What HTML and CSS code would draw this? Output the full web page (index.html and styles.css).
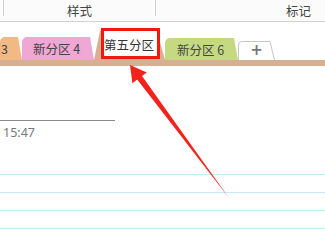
FILE: index.html
```html
<html>
    <head>
        <title>OneNote | Sections</title>
        <link rel="stylesheet" href="styles.css">
    </head>
    <body>
        <div class="ribbon">
            <div class="cell edge"></div>
            <div class="cell style">样式</div>
            <div class="cell mark">标记</div>
        </div>
        <div class="tabs">
            <div class="tab orange">3</div>
            <div class="tab pink">新分区 4</div>
            <div class="tab active"><span class="rename">第五分区</span></div>
            <div class="tab green">新分区 6</div>
            <div class="tab add">
                <svg class="add-shape" width="37" height="19" viewBox="0 0 37 19"><path d="M0.5 19 V4 Q0.5 0.5 4 0.5 H32 L36.5 19" fill="#fff" stroke="#c6c6c6"/></svg>
                <span>+</span>
            </div>
        </div>
        <div class="strip"></div>
        <div class="page">
            <div class="title-line"></div>
            <div class="time">15:47</div>
            <div class="rules">
                <div></div>
                <div></div>
                <div></div>
                <div></div>
                <div></div>
            </div>
        </div>
        <svg class="arrow" width="325" height="242" viewBox="0 0 325 242">
            <polygon points="130,65 146.8,72.4 142,76 229,198 137.2,79.6 132.4,83.2" fill="#f3221a"/>
        </svg>
    </body>
</html>
```

FILE: styles.css
```css
body {
    font-family: "Noto Sans CJK SC", sans-serif;
    margin: 0;
    overflow: hidden;
    color: #444;
}
.ribbon {
    display: flex;
    height: 21px;
    background: #fbfbfb;
    border-bottom: 1px solid #d2d2d2;
    font-size: 12.5px;
}
.cell {
    height: 16px;
    line-height: 22px;
    white-space: nowrap;
}
.edge {
    width: 3px;
    border-right: 1px solid #cfcfcf;
}
.style {
    width: 151px;
    text-align: center;
    border-right: 1px solid #cfcfcf;
}
.mark {
    padding-left: 130px;
}
.tabs {
    display: flex;
    align-items: flex-end;
    height: 38px;
    font-size: 12.5px;
}
.tab {
    position: relative;
    isolation: isolate;
    display: flex;
    align-items: center;
    box-sizing: border-box;
    height: 23px;
    white-space: nowrap;
}
.tab::before {
    content: "";
    position: absolute;
    inset: 0;
    z-index: -1;
    background: var(--c);
    border-radius: 5px 3px 0 0;
    clip-path: polygon(0 0, calc(100% - 4px) 0, 100% 100%, 0 100%);
}
.orange {
    --c: #f2b984;
    width: 22px;
    justify-content: flex-end;
    padding-right: 14px;
}
.pink {
    --c: #efa7d3;
    width: 72px;
    padding-left: 11px;
}
.active {
    --c: #d5b093;
    width: 71px;
    height: 29px;
    align-items: flex-end;
    padding: 0 0 1px 7px;
}
.active::before {
    border-radius: 3px 3px 0 0;
    clip-path: polygon(6px 0, calc(100% - 8px) 0, 100% 100%, 0 100%);
}
.rename {
    box-sizing: border-box;
    width: 59px;
    height: 31px;
    border: 3px solid #f0190f;
    background: #fff;
    padding-top: 2px;
    line-height: 24px;
    color: #333;
    overflow: hidden;
}
.green {
    --c: #c5da80;
    width: 73px;
    height: 22px;
    padding-left: 12px;
}
.add {
    width: 37px;
    height: 19px;
    justify-content: center;
}
.add::before {
    display: none;
}
.add-shape {
    position: absolute;
    left: 0;
    top: 0;
    z-index: -1;
}
.add span {
    color: #777;
    font-size: 15px;
    font-weight: bold;
    line-height: 19px;
    font-family: "DejaVu Sans", sans-serif;
}
.strip {
    height: 6px;
    background: #d5b093;
}
.title-line {
    margin-top: 54px;
    width: 115px;
    height: 1px;
    background: #8a8a8a;
}
.time {
    margin: 4px 0 0 3px;
    font-family: "Noto Sans", "Liberation Sans", sans-serif;
    font-size: 12.5px;
    line-height: 16px;
    color: #777;
}
.rules {
    margin-top: 16px;
}
.rules div {
    box-sizing: border-box;
    height: 18px;
    border-bottom: 1px solid #c7eaf8;
}
.arrow {
    position: absolute;
    top: 0;
    left: 0;
    pointer-events: none;
}
```
